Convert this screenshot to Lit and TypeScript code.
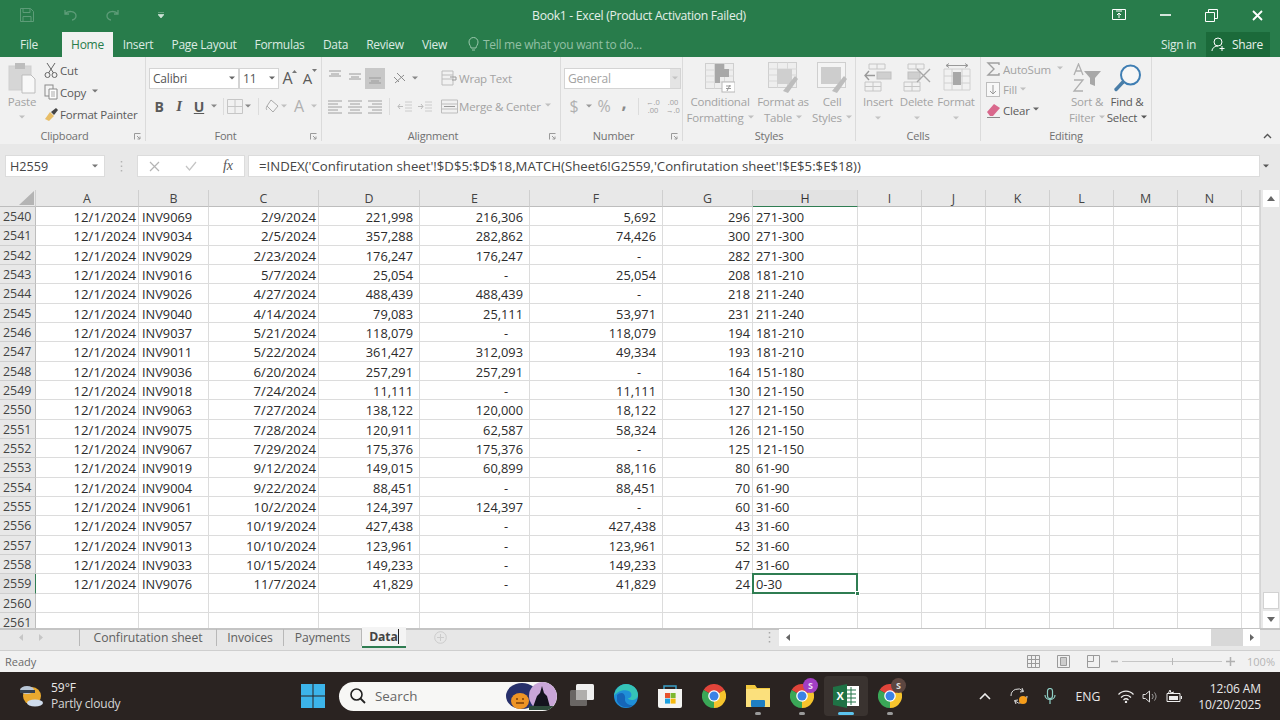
import { LitElement, html, css, svg } from 'lit';
import { customElement } from 'lit/decorators.js';

const rows = `2540 INV9069 2/9/2024 221,998 216,306 5,692 296 271-300
2541 INV9034 2/5/2024 357,288 282,862 74,426 300 271-300
2542 INV9029 2/23/2024 176,247 176,247 - 282 271-300
2543 INV9016 5/7/2024 25,054 - 25,054 208 181-210
2544 INV9026 4/27/2024 488,439 488,439 - 218 211-240
2545 INV9040 4/14/2024 79,083 25,111 53,971 231 211-240
2546 INV9037 5/21/2024 118,079 - 118,079 194 181-210
2547 INV9011 5/22/2024 361,427 312,093 49,334 193 181-210
2548 INV9036 6/20/2024 257,291 257,291 - 164 151-180
2549 INV9018 7/24/2024 11,111 - 11,111 130 121-150
2550 INV9063 7/27/2024 138,122 120,000 18,122 127 121-150
2551 INV9075 7/28/2024 120,911 62,587 58,324 126 121-150
2552 INV9067 7/29/2024 175,376 175,376 - 125 121-150
2553 INV9019 9/12/2024 149,015 60,899 88,116 80 61-90
2554 INV9004 9/22/2024 88,451 - 88,451 70 61-90
2555 INV9061 10/2/2024 124,397 124,397 - 60 31-60
2556 INV9057 10/19/2024 427,438 - 427,438 43 31-60
2557 INV9013 10/10/2024 123,961 - 123,961 52 31-60
2558 INV9033 10/15/2024 149,233 - 149,233 47 31-60
2559 INV9076 11/7/2024 41,829 - 41,829 24 0-30`
  .split('\n')
  .map((l) => l.split(' '));

const columns = 'A B C D E F G H I J K L M N'.split(' ');

const tabs = [
  ['File', 'w62', ''],
  ['Home', 'w51', 'active'],
  ['Insert', 'w48', ''],
  ['Page Layout', 'w84', ''],
  ['Formulas', 'w68', ''],
  ['Data', 'w44', ''],
  ['Review', 'w55', ''],
  ['View', 'w46', ''],
];

const icon = (w: number, h: number, body: unknown, cls = '') =>
  html`<svg class=${cls} width=${w} height=${h} viewBox="0 0 ${w} ${h}" fill="none">${body}</svg>`;

const lines = (xs: number[][], color = '#8c8c8c') =>
  xs.map(([x1, y, x2]) => svg`<path d="M${x1} ${y}H${x2}" stroke=${color} />`);

const chev = (color = '#9a9a9a') => icon(6, 4, svg`<path d="M0 .5h6L3 3.5z" fill=${color} />`);

const chrome = icon(
  24,
  24,
  svg`<path d="M12 12L1.6 6A12 12 0 0 1 22.4 6Z" fill="#e0443a" />
    <path d="M12 12L22.4 6A12 12 0 0 1 12 24Z" fill="#f6c42d" />
    <path d="M12 12L12 24A12 12 0 0 1 1.6 6Z" fill="#3aa757" />
    <circle cx="12" cy="12" r="5.8" fill="#fff" /><circle cx="12" cy="12" r="4.5" fill="#3b82e6" />`
);

const alignRow = (k: 'l' | 'c' | 'r') => {
  const a = [[1, 3, 15], [1, 6, 11], [1, 9, 15], [1, 12, 11], [1, 15, 15]];
  return icon(
    16,
    17,
    lines(a.map(([x, y, e], i) => (i % 2 === 0 || k === 'l' ? [x, y, e] : k === 'c' ? [3, y, 13] : [5, y, 15])), '#a0a0a0')
  );
};

@customElement('app-root')
export class AppRoot extends LitElement {
  static styles = css`
    :host {
      display: block;
      width: 1280px;
      height: 720px;
      overflow: hidden;
      font-family: 'Open Sans', 'Noto Sans', sans-serif;
      font-size: 11.5px;
      color: #5a5a5a;
      background: #f1f1f1;
    }
    svg {
      display: block;
      flex: none;
    }
    .titlebar {
      height: 30px;
      background: #287c4b;
      display: flex;
      align-items: center;
    }
    .qat {
      display: flex;
      align-items: center;
      padding-left: 20px;
      width: 320px;
      box-sizing: border-box;
      flex: none;
    }
    .qgap1 { width: 28px; flex: none; }
    .qgap2 { width: 29px; flex: none; }
    .qgap3 { width: 37px; flex: none; }
    .title {
      width: 638px;
      text-align: center;
      font-size: 12.2px;
      letter-spacing: -0.3px;
      color: #e4efe8;
    }
    .winbtns {
      display: flex;
      align-items: center;
      margin-left: auto;
    }
    .winbtn {
      width: 46px;
      display: flex;
      justify-content: center;
    }
    .tabbar {
      height: 27px;
      background: #287c4b;
      display: flex;
      align-items: flex-end;
      color: #dcebe2;
      font-size: 12px;
      letter-spacing: -0.28px;
    }
    .tab {
      height: 25px;
      display: flex;
      align-items: center;
      justify-content: center;
      flex: none;
    }
    .tab.active {
      background: #f1f1f1;
      color: #287c4b;
    }
    .w62 { width: 58px; margin-right: 4px; }
    .w51 { width: 51px; }
    .w48 { width: 50px; }
    .w84 { width: 82px; }
    .w68 { width: 69px; }
    .w44 { width: 43px; }
    .w55 { width: 56px; }
    .w46 { width: 43px; }
    .tell {
      display: flex;
      align-items: center;
      gap: 4px;
      height: 25px;
      margin-left: 12px;
      color: #93c0a5;
    }
    .signin {
      margin-left: auto;
      height: 25px;
      display: flex;
      align-items: center;
      padding-right: 10px;
    }
    .share {
      width: 64px;
      height: 25px;
      margin-right: 10px;
      display: flex;
      align-items: center;
      gap: 5px;
      padding-left: 5px;
      box-sizing: border-box;
      background: #1b6a3a;
      color: #e8f2ec;
    }
    .ribbon {
      height: 87px;
      display: flex;
      background: #f1f1f1;
      color: #a3a3a3;
      letter-spacing: -0.2px;
    }
    .group {
      flex: none;
      display: flex;
      flex-direction: column;
      box-sizing: border-box;
      border-right: 1px solid #dbdbdb;
      margin-bottom: 3px;
    }
    .body {
      height: 71px;
      display: flex;
      box-sizing: border-box;
    }
    .glabel {
      height: 13px;
      line-height: 16px;
      font-size: 11px;
      color: #707070;
      text-align: center;
      position: relative;
    }
    .glabel.wl { padding-right: 16px; }
    .launcher {
      position: absolute;
      right: 4px;
      top: 5px;
    }
    .g-clip { width: 146px; }
    .g-font { width: 176px; }
    .g-align { width: 239px; }
    .g-num { width: 122px; }
    .g-style { width: 173px; }
    .g-cells { width: 125px; }
    .g-edit { width: 171px; }
    .dark { color: #5a5a5a; }
    .pastecol {
      width: 44px;
      flex: none;
      display: flex;
      flex-direction: column;
      align-items: center;
      padding-top: 5px;
    }
    .big {
      flex: none;
      display: flex;
      flex-direction: column;
      align-items: center;
      padding-top: 4px;
      white-space: nowrap;
      line-height: 16px;
    }
    .st-a { width: 64px; margin-left: 5px; }
    .st-b { width: 62px; }
    .st-c { width: 36px; }
    .ce-a { width: 40px; margin-left: 2px; }
    .ce-b { width: 37px; }
    .ce-c { width: 42px; }
    .ed-a { width: 34px; }
    .ed-b { width: 44px; margin-left: 1px; }
    .bigicon {
      height: 33px;
      display: flex;
      align-items: center;
      justify-content: center;
    }
    .big span.chv {
      height: 16px;
      display: flex;
      align-items: center;
    }
    .chevline {
      height: 16px;
      display: flex;
      align-items: center;
    }
    .inl {
      display: inline-flex;
      vertical-align: middle;
      margin-left: 4px;
      padding-bottom: 2px;
    }
    .inl.tight { margin-left: 1px; }
    .smallcol {
      display: flex;
      flex-direction: column;
      padding-top: 2px;
      white-space: nowrap;
    }
    .edit-small {
      width: 84px;
      margin-left: 5px;
      flex: none;
    }
    .smallrow {
      height: 22px;
      display: flex;
      align-items: center;
      gap: 2px;
    }
    .sr20 { height: 20.5px; }
    .tworows {
      display: flex;
      flex-direction: column;
      gap: 6px;
      padding: 10px 0 0 3px;
    }
    .r {
      height: 22px;
      display: flex;
      align-items: center;
      white-space: nowrap;
    }
    .c {
      display: flex;
      align-items: center;
      justify-content: center;
      flex: none;
    }
    .c10 { width: 10px; }
    .c14 { width: 14px; }
    .c20 { width: 20px; }
    .c116 { width: 116px; flex: none; }
    .ml1 { margin-left: 1px; }
    .ml5 { margin-left: 5px; }
    .ml6 { margin-left: 6px; }
    .combo {
      height: 21px;
      box-sizing: border-box;
      background: #fff;
      border: 1px solid #d4d4d4;
      display: flex;
      align-items: center;
      justify-content: space-between;
      padding: 0 3px;
      color: #555;
      flex: none;
      font-size: 12px;
    }
    .cb-font { width: 90px; }
    .cb-size { width: 40px; margin-right: 4px; }
    .cb-num {
      width: 117px;
      color: #a3a3a3;
      padding-right: 0;
    }
    .cb-num i {
      width: 10px;
      height: 19px;
      background: #e4e4e4;
      display: flex;
      align-items: center;
      justify-content: center;
    }
    .sep {
      width: 1px;
      height: 17px;
      background: #dcdcdc;
      margin: 0 4px;
      flex: none;
    }
    .sep.s1 { margin: 0 3px 0 4px; }
    .sep.s2 { margin: 0 6px 0 5px; }
    .active-box {
      height: 21px;
      background: #c8c8c8;
    }
    .b { font-weight: 700; font-size: 14px; color: #5a5a5a; }
    .it { font-style: italic; font-family: 'Liberation Serif', serif; font-weight: 700; font-size: 15px; color: #5a5a5a; }
    .u { text-decoration: underline; font-weight: 700; font-size: 14px; color: #5a5a5a; }
    .grow { font-size: 16px; color: #5a5a5a; align-items: flex-start; line-height: 21px; }
    .shrink { font-size: 15px; color: #5a5a5a; align-items: flex-start; line-height: 22px; }
    .sup { margin-top: 2px; }
    .glyphB { font-size: 16px; color: #b0b0b0; }
    .comma { font-size: 18px; font-weight: 700; color: #8a8a8a; line-height: 14px; padding-bottom: 8px; }
    .stack {
      flex-direction: column;
      font-size: 7.5px;
      line-height: 8.5px;
      color: #a0a0a0;
      letter-spacing: 0;
    }
    .collapse {
      margin: 76px 0 0 auto;
      padding-right: 8px;
    }
    .fbarwrap {
      height: 46px;
      background: #e8e8e8;
      box-sizing: border-box;
      padding: 11px 0 0 5px;
      display: flex;
    }
    .fbox {
      height: 22px;
      background: #fff;
      border: 1px solid #dcdcdc;
      box-sizing: border-box;
      display: flex;
      align-items: center;
      flex: none;
      font-size: 12.6px;
      color: #444;
    }
    .namebox {
      width: 100px;
      justify-content: space-between;
      padding: 0 6px 0 4px;
    }
    .dots {
      width: 32px;
      height: 22px;
      display: flex;
      justify-content: center;
      align-items: center;
    }
    .fxbox {
      width: 108px;
      justify-content: space-between;
      padding: 0 11px;
    }
    .fx {
      font-family: 'Liberation Serif', serif;
      font-style: italic;
      font-size: 14px;
      color: #555;
    }
    .ftext {
      width: 1012px;
      margin-left: 3px;
      padding-left: 10px;
      white-space: nowrap;
      font-size: 13.2px;
    }
    .fdrop {
      width: 12px;
      display: flex;
      justify-content: center;
      align-items: center;
      height: 22px;
    }
    .sheetarea {
      display: flex;
      height: 438px;
      background: #fff;
    }
    .grid {
      width: 1260px;
      flex: none;
      display: grid;
      grid-template-columns: 36px 103px 70px 110px 101px 110px 133px 90px 105px 64px 64px 64px 64px 64px 64px 18px;
      grid-template-rows: 17px;
      grid-auto-rows: 19.34px;
      overflow: hidden;
      font-size: 12.8px;
      color: #2b2b2b;
    }
    .hd {
      background: #e8e8e8;
      border-right: 1px solid #cfcfcf;
      border-bottom: 1px solid #bdbdbd;
      box-sizing: border-box;
      text-align: center;
      line-height: 17px;
      color: #444;
      font-size: 12.4px;
    }
    .hd.sel {
      background: #e2e2e2;
      border-bottom: 1px solid #2f7d52;
      color: #333;
    }
    .corner {
      position: relative;
    }
    .corner svg {
      position: absolute;
      right: 1px;
      bottom: 1px;
    }
    .rh {
      background: #e8e8e8;
      border-right: 1px solid #bdbdbd;
      border-bottom: 1px solid #cfcfcf;
      box-sizing: border-box;
      padding-left: 3px;
      line-height: 20px;
      color: #444;
      font-size: 12.4px;
    }
    .rh.sel {
      border-right: 1px solid #2f7d52;
      background: #e2e2e2;
    }
    .cell {
      border-right: 1px solid #dcdcdc;
      border-bottom: 1px solid #dcdcdc;
      box-sizing: border-box;
      line-height: 20px;
      white-space: nowrap;
      overflow: hidden;
      padding: 0 2px;
    }
    .cell.left { padding-left: 3px; }
    .ra { text-align: right; }
    .date { font-size: 13.2px; }
    .money { text-align: right; padding-right: 6px; }
    .dash { text-align: right; padding-right: 21px; }
    .selected {
      position: relative;
      overflow: visible;
    }
    .selected::after {
      content: '';
      position: absolute;
      inset: -1px;
      border: 2px solid #2f7d52;
      box-sizing: border-box;
    }
    .selected::before {
      content: '';
      position: absolute;
      right: -3px;
      bottom: -3px;
      width: 5px;
      height: 5px;
      background: #2f7d52;
      border: 1px solid #fff;
      box-sizing: border-box;
      z-index: 1;
    }
    .vscroll {
      width: 20px;
      background: #e8e8e8;
      display: flex;
      flex-direction: column;
      align-items: center;
      flex: none;
      border-left: 1px solid #d4d4d4;
      box-sizing: border-box;
    }
    .sbtn {
      width: 16px;
      height: 17px;
      background: #fff;
      display: flex;
      align-items: center;
      justify-content: center;
    }
    .vthumb {
      width: 16px;
      height: 17px;
      background: #fff;
      margin: auto 0 2px;
      border: 1px solid #d2d2d2;
      box-sizing: border-box;
    }
    .tabstrip {
      height: 23px;
      background: #e7e7e7;
      border-top: 2px solid #c4c4c4;
      border-bottom: 1px solid #cfcfcf;
      padding-bottom: 5px;
      box-sizing: border-box;
      display: flex;
      align-items: center;
      color: #606060;
      font-size: 12.2px;
    }
    .navs {
      width: 80px;
      display: flex;
      gap: 16px;
      padding-left: 19px;
      box-sizing: border-box;
      flex: none;
      height: 17px;
      align-items: center;
      border-right: 1px solid #b8b8b8;
    }
    .stab {
      height: 17px;
      display: flex;
      align-items: center;
      justify-content: center;
      border-right: 1px solid #b8b8b8;
      box-sizing: border-box;
      flex: none;
      letter-spacing: -0.05px;
    }
    .st1 { width: 137px; }
    .st2 { width: 67px; }
    .st3 { width: 78px; }
    .sactive {
      width: 44px;
      height: 21px;
      flex: none;
      background: #f4f4f4;
      border-bottom: 2px solid #2f7d52;
      box-sizing: border-box;
      display: flex;
      align-items: center;
      justify-content: center;
      font-weight: 700;
      letter-spacing: -0.1px;
      color: #444;
    }
    .caret {
      width: 1px;
      height: 15px;
      background: #222;
    }
    .add {
      margin-left: 28px;
      width: 325px;
      flex: none;
    }
    .hsgrip {
      width: 20px;
      flex: none;
      display: flex;
      justify-content: center;
    }
    .hs {
      width: 481px;
      height: 17px;
      display: flex;
      flex: none;
      background: #d8d8d8;
    }
    .hsbtn {
      width: 17px;
      background: #fff;
      display: flex;
      align-items: center;
      justify-content: center;
      flex: none;
    }
    .hsthumb {
      width: 415px;
      background: #fff;
      flex: none;
    }
    .hsgap { flex: 1; }
    .status {
      height: 21px;
      display: flex;
      align-items: center;
      padding-left: 5px;
      color: #6a6a6a;
      font-size: 11px;
      background: #f1f1f1;
    }
    .views {
      margin-left: auto;
      display: flex;
      align-items: center;
    }
    .viewbtn {
      width: 30px;
      display: flex;
      justify-content: center;
    }
    .zoom {
      display: flex;
      align-items: center;
      margin: 0 5px 0 3px;
      color: #b5b5b5;
      gap: 4px;
    }
    .zoom span { margin-left: 8px; }
    .slider {
      width: 100px;
      height: 9px;
      position: relative;
    }
    .slider::before {
      content: '';
      position: absolute;
      left: 0;
      right: 0;
      top: 4px;
      height: 1px;
      background: #c6c6c6;
    }
    .slider::after {
      content: '';
      position: absolute;
      left: 50px;
      top: 1px;
      width: 1px;
      height: 7px;
      background: #b8b8b8;
    }
    .taskbar {
      height: 48px;
      background: #2a2321;
      display: flex;
      align-items: center;
      color: #e9e9e9;
    }
    .weather {
      width: 291px;
      flex: none;
      display: flex;
      align-items: center;
      gap: 8px;
      padding-left: 19px;
      box-sizing: border-box;
      font-size: 12px;
      line-height: 16px;
    }
    .weather small {
      display: block;
      font-size: 12px;
      letter-spacing: -0.2px;
      color: #d6d6d6;
    }
    .tb {
      width: 44px;
      height: 40px;
      flex: none;
      display: flex;
      align-items: center;
      justify-content: center;
      position: relative;
      box-sizing: border-box;
    }
    .tb.open::after {
      content: '';
      position: absolute;
      bottom: 1px;
      left: 19px;
      width: 6px;
      height: 3px;
      border-radius: 2px;
      background: #9a9a9a;
    }
    .tb.current {
      background: #3a3330;
      border-radius: 4px;
    }
    .tb.current::after {
      left: 14px;
      width: 16px;
      background: #5cc4ee;
    }
    .badge {
      position: absolute;
      top: 2px;
      right: 6px;
      width: 15px;
      height: 15px;
      border-radius: 50%;
      background: #a23ec4;
      color: #eedcf4;
      font-size: 9px;
      font-weight: 700;
      display: flex;
      align-items: center;
      justify-content: center;
    }
    .badge.brown {
      background: #5d4640;
      color: #ddd;
    }
    .search {
      width: 218px;
      height: 29px;
      margin: 0 3px 0 4px;
      flex: none;
      border-radius: 15px;
      background: #f7f7f5;
      display: flex;
      align-items: center;
      padding-left: 11px;
      box-sizing: border-box;
      color: #666;
      font-size: 13.4px;
      gap: 9px;
      overflow: hidden;
    }
    .doodle {
      margin-left: auto;
    }
    .tray {
      margin-left: 64px;
      display: flex;
      align-items: center;
      flex: none;
    }
    .t {
      display: flex;
      justify-content: center;
      align-items: center;
      flex: none;
    }
    .t-chev { width: 18px; margin-right: 15px; }
    .t-sync { width: 20px; margin-right: 13px; }
    .t-mic { width: 16px; margin-right: 16px; }
    .t-eng { width: 28px; font-size: 12.2px; margin-right: 15px; }
    .t-wifi { width: 18px; margin-right: 5px; }
    .t-vol { width: 18px; margin-right: 7px; }
    .t-bat { width: 18px; }
    .clock {
      margin-left: 8px;
      width: 70px;
      padding-top: 1px;
      text-align: right;
      font-size: 12px;
      letter-spacing: -0.1px;
      line-height: 16px;
    }
  `;

  private paste() {
    return icon(
      28,
      32,
      svg`<rect x="1" y="4" width="22" height="24" fill="#d6d6d6" stroke="#cfcfcf" />
        <rect x="7" y="1" width="10" height="6" fill="#bdbdbd" />
        <path d="M14 13h9l4 4v14H14z" fill="#f8f8f8" stroke="#bdbdbd" />`
    );
  }

  private clipboard() {
    return html`<div class="group g-clip">
      <div class="body">
        <div class="pastecol">
          ${this.paste()}
          <span>Paste</span>
          <div class="chevline">${chev('#c0c0c0')}</div>
        </div>
        <div class="smallcol dark">
          <div class="smallrow">
            ${icon(14, 16, svg`<circle cx="3.5" cy="13" r="2.5" stroke="#666" /><circle cx="10.5" cy="13" r="2.5" stroke="#666" />
              <path d="M4.5 11L11 1M9.5 11L3 1" stroke="#666" />`)}
            Cut
          </div>
          <div class="smallrow">
            ${icon(14, 16, svg`<rect x="1" y="1" width="8" height="11" fill="#f4f4f4" stroke="#8a8a8a" />
              <path d="M5 5h8v10H5z" fill="#fff" stroke="#8a8a8a" /><path d="M7 8h4M7 10h4M7 12h4" stroke="#aaa" />`)}
            Copy <span class="inl">${chev('#777')}</span>
          </div>
          <div class="smallrow">
            ${icon(14, 14, svg`<path d="M1 12l5-7 4 4-5 5z" fill="#e8bd66" /><path d="M7 5l5-4 2 2-4 5z" fill="#444" />`)}
            Format Painter
          </div>
        </div>
      </div>
      <div class="glabel wl">Clipboard${this.launcher()}</div>
    </div>`;
  }

  private launcher() {
    return html`<span class="launcher">${icon(7, 7, svg`<path d="M.5 6.5v-6h6M3 3l3 3M6 3.5V6H3.5" stroke="#9a9a9a" />`)}</span>`;
  }

  private font() {
    return html`<div class="group g-font">
      <div class="body">
        <div class="tworows">
          <div class="r">
            <div class="combo cb-font">Calibri ${chev('#666')}</div>
            <div class="combo cb-size">11 ${chev('#666')}</div>
            <span class="c c14 grow">A${icon(5, 3, svg`<path d="M0 3l2.500-3L5 3z" fill="#777" />`, 'sup')}</span>
            <span class="c c14 shrink ml6">A${icon(5, 3, svg`<path d="M0 0l2.500 3L5 0z" fill="#777" />`, 'sup')}</span>
          </div>
          <div class="r">
            <span class="c c20 b">B</span>
            <span class="c c20 it">I</span>
            <span class="c c20 u">U</span>
            <span class="c c10">${chev('#888')}</span>
            <span class="sep s1"></span>
            ${icon(16, 15, svg`<path d="M.5.5h15v14H.5zM8 .5v14M.5 7.5h15" stroke="#c6c6c6" />`)}
            <span class="c c10">${chev('#888')}</span>
            <span class="sep s2"></span>
            ${icon(14, 15, svg`<path d="M6 1l7 6-5 6-6-6z" fill="#f4f4f4" stroke="#aaa" /><path d="M2 7c-1 2-1 3 0 4" stroke="#aaa" />`)}
            <span class="c c10">${chev('#c0c0c0')}</span>
            <span class="c c20 glyphB">A</span>
            <span class="c c10">${chev('#c0c0c0')}</span>
          </div>
        </div>
      </div>
      <div class="glabel wl">Font${this.launcher()}</div>
    </div>`;
  }

  private alignment() {
    const top = (y: number) =>
      icon(16, 17, lines([[2, y, 14], [4, y + 3, 12], [2, y + 5, 14]], '#9a9a9a'));
    return html`<div class="group g-align">
      <div class="body">
        <div class="tworows">
          <div class="r">
            <div class="r c116">
              <span class="c c20">${top(1)}</span>
              <span class="c c20">${top(4)}</span>
              <span class="c c20 active-box">${top(8)}</span>
              <span class="c c20 ml5">
                ${icon(16, 14, svg`<path d="M3 12l9-8M5 2l8 8M2 6l5 5" stroke="#8c8c8c" />`)}
              </span>
              <span class="c c10">${chev('#888')}</span>
            </div>
            ${icon(17, 16, svg`<path d="M1 1h11v14H1zM1 5h11M1 9h11" stroke="#bdbdbd" /><path d="M9 7h6v3h-4" stroke="#999" />`)}
            <span class="ml1">Wrap Text</span>
          </div>
          <div class="r">
            <div class="r c116">
              <span class="c c20">${alignRow('l')}</span>
              <span class="c c20">${alignRow('c')}</span>
              <span class="c c20">${alignRow('r')}</span>
              <span class="sep"></span>
              <span class="c c20">${icon(15, 13, svg`<path d="M1 6.5h5M3 4L1 6.5 3 9" stroke="#bbb" />${lines([[8, 2, 15], [8, 5, 15], [8, 8, 15], [8, 11, 15]], '#ccc')}`)}</span>
              <span class="c c20">${icon(15, 13, svg`<path d="M1 6.5h5M4 4l2 2.5L4 9" stroke="#bbb" />${lines([[8, 2, 15], [8, 5, 15], [8, 8, 15], [8, 11, 15]], '#ccc')}`)}</span>
            </div>
            ${icon(17, 15, svg`<path d="M.5 1h16v13H.5zM.5 5h16M.5 10h16" stroke="#bdbdbd" /><path d="M3 7.5h11" stroke="#999" />`)}
            <span class="ml1">Merge &amp; Center</span>
            <span class="inl">${chev('#c0c0c0')}</span>
          </div>
        </div>
      </div>
      <div class="glabel wl">Alignment${this.launcher()}</div>
    </div>`;
  }

  private number() {
    return html`<div class="group g-num">
      <div class="body">
        <div class="tworows">
          <div class="r">
            <div class="combo cb-num">General <i>${chev('#c4c4c4')}</i></div>
          </div>
          <div class="r">
            <span class="c c20 glyphB">$</span>
            <span class="c c10">${chev('#999')}</span>
            <span class="c c20 glyphB">%</span>
            <span class="c c20 comma">,</span>
            <span class="sep"></span>
            <span class="c c20 stack"><span>←.0</span><span>.00</span></span>
            <span class="c c20 stack"><span>.00</span><span>→.0</span></span>
          </div>
        </div>
      </div>
      <div class="glabel wl">Number${this.launcher()}</div>
    </div>`;
  }

  private big(label: string, second: unknown, art: unknown, cls: string, dark = false) {
    return html`<div class="big ${cls} ${dark ? 'dark' : ''}">
      <div class="bigicon">${art}</div>
      <span>${label}</span>
      <span class="chv">${second}</span>
    </div>`;
  }

  private styles_() {
    const table = svg`<rect x=".5" y=".5" width="28" height="25" fill="#eee" stroke="#cfcfcf" />
      <path d="M.5 7h28M.5 13h28M.5 19h28M9.5.5v25M19.5.5v25" stroke="#d8d8d8" />`;
    const brush = svg`<path d="M15 29l12-15 3 3-10 14z" fill="#bdbdbd" />`;
    return html`<div class="group g-style">
      <div class="body">
        ${this.big(
          'Conditional',
          html`Formatting <span class="inl">${chev('#c0c0c0')}</span>`,
          icon(30, 30, svg`${table}<path d="M10 1h9v5h5v8h-9v6h-5z" fill="#a8a8a8" />
            <rect x="17" y="19" width="13" height="10" fill="#fff" stroke="#b8b8b8" />
            <path d="M21 23h5M21 25.5h5M22 28l3-6" stroke="#999" />`),
          'st-a'
        )}
        ${this.big(
          'Format as',
          html`Table <span class="inl">${chev('#c0c0c0')}</span>`,
          icon(30, 31, svg`${table}<rect x="9" y="7" width="15" height="15" fill="#cfcfcf" />${brush}`),
          'st-b'
        )}
        ${this.big(
          'Cell',
          html`Styles <span class="inl">${chev('#c0c0c0')}</span>`,
          icon(30, 31, svg`<rect x=".5" y=".5" width="28" height="25" fill="#f4f4f4" stroke="#cfcfcf" />
            <rect x="4" y="5" width="20" height="17" fill="#cdcdcd" />${brush}`),
          'st-c'
        )}
      </div>
      <div class="glabel">Styles</div>
    </div>`;
  }

  private cells() {
    const small = svg`<path d="M6 1h16v5H6zM14 1v5M2 19h16v9H2zM10 19v9M2 23.5h16" stroke="#c6c6c6" />`;
    return html`<div class="group g-cells">
      <div class="body">
        ${this.big(
          'Insert',
          chev('#c4c4c4'),
          icon(30, 30, svg`${small}<rect x="14" y="9" width="14" height="7" fill="#cfcfcf" stroke="#c0c0c0" /><path d="M12 12.5H2M6 8l-4 4.5L6 17" stroke="#9a9a9a" stroke-width="1.4" />`),
          'ce-a'
        )}
        ${this.big(
          'Delete',
          chev('#c4c4c4'),
          icon(30, 30, svg`${small}<rect x="6" y="9" width="12" height="7" fill="#cfcfcf" stroke="#c0c0c0" /><path d="M15 6l13 13M28 6L15 19" stroke="#a8a8a8" stroke-width="1.4" />`),
          'ce-b'
        )}
        ${this.big(
          'Format',
          chev('#c4c4c4'),
          icon(30, 30, svg`<path d="M3 6h26v21H3zM11 6v21M21 6v21M3 13h26M3 20h26" stroke="#d0d0d0" /><path d="M5 2.5h22M5 2.5L8 .5M5 2.5l3 2M27 2.5l-3-2M27 2.5l-3 2" stroke="#999" /><rect x="12" y="9" width="8" height="13" fill="#a8a8a8" />`),
          'ce-c'
        )}
      </div>
      <div class="glabel">Cells</div>
    </div>`;
  }

  private editing() {
    return html`<div class="group g-edit">
      <div class="body">
        <div class="smallcol edit-small">
          <div class="smallrow sr20">
            ${icon(15, 14, svg`<path d="M13 3V1H2l6 6-6 6h11v-2" stroke="#a0a0a0" stroke-width="1.4" />`)}
            AutoSum <span class="inl">${chev('#c0c0c0')}</span>
          </div>
          <div class="smallrow sr20">
            ${icon(15, 15, svg`<rect x=".5" y=".5" width="13" height="14" fill="#f8f8f8" stroke="#bdbdbd" /><path d="M7 3v9M4 9l3 3 3-3" stroke="#999" />`)}
            Fill <span class="inl tight">${chev('#c0c0c0')}</span>
          </div>
          <div class="smallrow sr20 dark">
            ${icon(15, 15, svg`<path d="M1 9l7-8 6 4-7 8H4z" fill="#d9688c" /><path d="M1 14.5h13" stroke="#888" />`)}
            Clear <span class="inl tight">${chev('#666')}</span>
          </div>
        </div>
        ${this.big(
          'Sort &',
          html`Filter <span class="inl">${chev('#c0c0c0')}</span>`,
          icon(30, 30, svg`<path d="M2 12L6.500 1 11 12M3.500 8h6M2 17h9L2 28h9" stroke="#b0b0b0" stroke-width="1.300" />
            <path d="M12 8h17l-6 7v8l-5-2v-6z" fill="#a8a8a8" />`),
          'ed-a'
        )}
        ${this.big(
          'Find &',
          html`Select <span class="inl">${chev('#555')}</span>`,
          icon(28, 28, svg`<circle cx="17.500" cy="11" r="9.500" stroke="#3f7eb3" stroke-width="2" fill="#f6f6f6" />
            <path d="M10 18L3 25.500" stroke="#4a7ea8" stroke-width="3.400" stroke-linecap="round" />`),
          'ed-b',
          true
        )}
      </div>
      <div class="glabel">Editing</div>
    </div>`;
  }

  private sheet() {
    return html`<div class="sheetarea">
      <div class="grid">
        <div class="hd corner">${icon(15, 14, svg`<path d="M15 0v14H0z" fill="#b4b4b4" />`)}</div>
        ${columns.map((c) => html`<div class="hd ${c === 'H' ? 'sel' : ''}">${c}</div>`)}
        <div class="hd"></div>
        ${rows.map((r, i) => {
          const last = i === rows.length - 1;
          const [n, inv, date, d, e, f, g, h] = r;
          return html`
            <div class="rh ${last ? 'sel' : ''}">${n}</div>
            <div class="cell ra date">12/1/2024</div>
            <div class="cell left">${inv}</div>
            <div class="cell ra date">${date}</div>
            <div class="cell money">${d}</div>
            <div class="cell ${e === '-' ? 'dash' : 'money'}">${e}</div>
            <div class="cell ${f === '-' ? 'dash' : 'money'}">${f}</div>
            <div class="cell ra">${g}</div>
            <div class="cell left ${last ? 'selected' : ''}">${h}</div>
            ${columns.slice(8).map(() => html`<div class="cell"></div>`)}
            <div class="cell"></div>
          `;
        })}
        ${['2560', '2561'].map(
          (n) => html`<div class="rh">${n}</div>
            ${columns.map(() => html`<div class="cell"></div>`)}
            <div class="cell"></div>`
        )}
      </div>
      <div class="vscroll">
        <div class="sbtn">${icon(8, 5, svg`<path d="M0 5h8L4 0z" fill="#666" />`)}</div>
        <div class="vthumb"></div>
        <div class="sbtn">${icon(8, 5, svg`<path d="M0 0h8L4 5z" fill="#666" />`)}</div>
      </div>
    </div>`;
  }

  private strip() {
    return html`<div class="tabstrip">
      <div class="navs">
        ${icon(4, 7, svg`<path d="M4 0v7L0 3.5z" fill="#c6c6c6" />`)}
        ${icon(4, 7, svg`<path d="M0 0v7l4-3.5z" fill="#c6c6c6" />`)}
      </div>
      <div class="stab st1">Confirutation sheet</div>
      <div class="stab st2">Invoices</div>
      <div class="stab st3">Payments</div>
      <div class="sactive">Data<span class="caret"></span></div>
      <div class="add">${icon(13, 13, svg`<circle cx="6.5" cy="6.5" r="5.8" stroke="#ccc" /><path d="M6.5 3v7M3 6.5h7" stroke="#ccc" />`)}</div>
      <div class="hsgrip">${icon(3, 11, svg`<path d="M1.500 0v1.500M1.500 4.500V6M1.500 9v1.500" stroke="#a8a8a8" stroke-width="1.500" />`)}</div>
      <div class="hs">
        <div class="hsbtn">${icon(4, 7, svg`<path d="M4 0v7L0 3.5z" fill="#666" />`)}</div>
        <div class="hsthumb"></div>
        <div class="hsgap"></div>
        <div class="hsbtn">${icon(4, 7, svg`<path d="M0 0v7l4-3.5z" fill="#666" />`)}</div>
      </div>
    </div>`;
  }

  private taskbar() {
    return html`<div class="taskbar">
      <div class="weather">
        ${icon(24, 24, svg`<circle cx="13" cy="12" r="9" fill="#e8a92f" /><ellipse cx="8" cy="6" rx="7" ry="4" fill="#b9c6d6" />
          <rect x="1" y="6" width="15" height="3" fill="#34404e" /><ellipse cx="16" cy="19" rx="8" ry="3.4" fill="#cfdcec" />`)}
        <div>59°F<small>Partly cloudy</small></div>
      </div>
      <div class="tb">
        ${icon(24, 24, svg`<path d="M0 0h11.5v11.5H0zM12.5 0H24v11.5H12.5zM0 12.5h11.5V24H0zM12.5 12.5H24V24H12.5z" fill="#3cb4ea" />`)}
      </div>
      <div class="search">
        ${icon(16, 16, svg`<circle cx="6.5" cy="6.5" r="5.5" stroke="#222" stroke-width="1.6" /><path d="M10.5 10.5L15 15" stroke="#222" stroke-width="1.8" />`)}
        Search
        <div class="doodle">
          ${icon(52, 29, svg`<ellipse cx="17" cy="14" rx="16" ry="13" fill="#27306b" />
            <ellipse cx="38" cy="14" rx="14" ry="14" fill="#c9a6d8" />
            <path d="M28 25l4-11 3-3 2-7 2 7 3 3 3 11z" fill="#14141e" />
            <rect x="24" y="24" width="24" height="4" fill="#2d4a3a" />
            <ellipse cx="15" cy="19" rx="9" ry="8" fill="#ee9425" />
            <path d="M11 17h2M17 17h2M11 21h8" stroke="#7a3c08" stroke-width="1.4" />`)}
        </div>
      </div>
      <div class="tb">
        ${icon(24, 24, svg`<rect x="0" y="6" width="17" height="16" rx="1.5" fill="#6a6664" /><rect x="6" y="0" width="18" height="16" rx="1.5" fill="#efefef" />
          <rect x="6" y="6" width="11" height="10" fill="#b0aeac" />`)}
      </div>
      <div class="tb">
        ${icon(24, 24, svg`<circle cx="12" cy="12" r="12" fill="#1f8fd8" /><path d="M0 12C1 4 7 0 12 0c7 0 12 5 12 11 0 3-3 5-6 5-2 0-4-1-4-2 3 0 4-2 3-5-2-4-12-4-17 3z" fill="#35c3b6" />
          <path d="M3 11c4-4 9-2 8 4-.5 3 3 7 8 6-4 4-13 3-16-4z" fill="#1565b8" />`)}
      </div>
      <div class="tb">
        ${icon(24, 24, svg`<path d="M6 6V2h12v4" stroke="#3aa0c8" stroke-width="1.5" /><path d="M0 5h24v17a2 2 0 0 1-2 2H2a2 2 0 0 1-2-2z" fill="#f4f4f2" />
          <rect x="7" y="9" width="5" height="5" fill="#e6522c" /><rect x="12.6" y="9" width="5" height="5" fill="#7cb82f" />
          <rect x="7" y="14.6" width="5" height="5" fill="#1da1e0" /><rect x="12.6" y="14.6" width="5" height="5" fill="#f6b90f" />`)}
      </div>
      <div class="tb">${chrome}</div>
      <div class="tb open">
        ${icon(24, 22, svg`<path d="M0 0h9l2 3h13v19H0z" fill="#f2c93e" /><rect x="0" y="4" width="24" height="18" fill="#fbe07c" /><rect x="5" y="15" width="14" height="7" rx="1" fill="#1f7fc2" />`)}
      </div>
      <div class="tb open">${chrome}<span class="badge">S</span></div>
      <div class="tb open current">
        ${icon(26, 24, svg`<rect x="11" y="2" width="15" height="20" fill="#fff" /><path d="M14 6h9M14 10h9M14 14h9M14 18h9M18 3v18" stroke="#217346" />
          <path d="M0 3l14-3v24L0 21z" fill="#1f7245" /><text x="3.5" y="16" font-size="11" font-weight="700" fill="#fff" font-family="Open Sans">X</text>`)}
      </div>
      <div class="tb open">${chrome}<span class="badge brown">S</span></div>
      <div class="tray">
        <div class="t t-chev">${icon(12, 7, svg`<path d="M1 6l5-5 5 5" stroke="#eee" stroke-width="1.6" />`)}</div>
        <div class="t t-sync">
          ${icon(18, 18, svg`<path d="M1 9a7 7 0 0 1 12-5M12 1l1.500 3.500L10 5M17 9a7 7 0 0 1-12 5M6 17l-1.500-3.500L8 13" stroke="#ddd" />
            <circle cx="13" cy="13" r="4" fill="#f59c1a" />`)}
        </div>
        <div class="t t-mic">
          ${icon(12, 16, svg`<rect x="3.500" y=".5" width="5" height="10" rx="2.500" stroke="#8fd0c6" stroke-width="1.2" /><path d="M1 7c0 6 10 6 10 0M6 12v4" stroke="#8fd0c6" stroke-width="1.2" />`)}
        </div>
        <div class="t t-eng">ENG</div>
        <div class="t t-wifi">
          ${icon(16, 13, svg`<path d="M.5 4.500c4-4.500 11-4.500 15 0M3 7.500c3-3 7-3 10 0M5.500 10c1.500-1.500 3.500-1.500 5 0" stroke="#eee" stroke-width="1.200" /><circle cx="8" cy="12" r="1.200" fill="#eee" />`)}
        </div>
        <div class="t t-vol">
          ${icon(15, 13, svg`<path d="M1 4.500h2.500L7.500 1v11L3.500 8.500H1z" stroke="#ddd" /><path d="M10 4c1.500 2 1.500 3 0 5M12.500 2.500c2 3 2 5 0 8" stroke="#aaa" />`)}
        </div>
        <div class="t t-bat">
          ${icon(16, 12, svg`<path d="M1 3.500h13v8H1z" fill="none" stroke="#eee" /><path d="M3 6h9v4H3z" fill="#eee" /><path d="M15.500 6v3" stroke="#eee" stroke-width="1.400" /><path d="M2 4l2-4 1 3 3-1" stroke="#eee" />`)}
        </div>
        <div class="clock">12:06 AM<br />10/20/2025</div>
      </div>
    </div>`;
  }

  render() {
    return html`
      <div class="titlebar">
        <div class="qat">
          ${icon(14, 14, svg`<path d="M.5.5h10l3 3v10H.5zM3 .5v4h7v-4M3 13.500v-5h8v5" stroke="#5d9c78" />`)}
          <span class="qgap1"></span>
          ${icon(15, 12, svg`<path d="M3 1v4h4M3 5c3-4 11-3 11 2 0 2-2 4-4 4" stroke="#5d9c78" stroke-width="1.300" />`)}
          <span class="qgap2"></span>
          ${icon(15, 12, svg`<path d="M12 1v4H8M12 5C9 1 1 2 1 7c0 2 2 4 4 4" stroke="#5d9c78" stroke-width="1.300" />`)}
          <span class="qgap3"></span>
          ${icon(6, 7, svg`<path d="M0 0h6M0 2.500h6l-3 3.500z" stroke="#cfe3d7" fill="#cfe3d7" stroke-width=".7" />`)}
        </div>
        <div class="title">Book1 - Excel (Product Activation Failed)</div>
        <div class="winbtns">
          <div class="winbtn">${icon(14, 12, svg`<path d="M.5.5h13v10H.5zM4 2h6M7 9V4M5 6l2-2 2 2" stroke="#fff" />`)}</div>
          <div class="winbtn">${icon(11, 2, svg`<path d="M0 1h11" stroke="#fff" stroke-width="1.600" />`)}</div>
          <div class="winbtn">${icon(13, 13, svg`<path d="M.5 3.500h9v9h-9zM3.500 3.500v-3h9v9h-3" stroke="#fff" />`)}</div>
          <div class="winbtn">${icon(11, 11, svg`<path d="M1 1l9 9M10 1l-9 9" stroke="#fff" stroke-width="1.800" />`)}</div>
        </div>
      </div>
      <div class="tabbar">
        ${tabs.map(([t, w, a]) => html`<div class="tab ${w} ${a}">${t}</div>`)}
        <div class="tell">
          ${icon(11, 15, svg`<path d="M3 11c0-2-2-3-2-6a4.500 4.500 0 0 1 9 0c0 3-2 4-2 6zM4 13h3" stroke="#9cc9ae" />`)}
          Tell me what you want to do...
        </div>
        <div class="signin">Sign in</div>
        <div class="share">
          ${icon(16, 15, svg`<circle cx="7" cy="5" r="4" stroke="#fff" /><path d="M1 14c0-3 3-5 6-5M11 9v5M8.500 11.500h5" stroke="#fff" />`)}
          Share
        </div>
      </div>
      <div class="ribbon">
        ${this.clipboard()} ${this.font()} ${this.alignment()} ${this.number()} ${this.styles_()} ${this.cells()} ${this.editing()}
        <div class="collapse">${icon(9, 6, svg`<path d="M1 5l3.500-3.500L8 5" stroke="#555" stroke-width="1.400" />`)}</div>
      </div>
      <div class="fbarwrap">
        <div class="fbox namebox">H2559 ${chev('#777')}</div>
        <div class="dots">${icon(3, 13, svg`<path d="M1.500 1v1.500M1.500 5.500V7M1.500 10v1.500" stroke="#b4b4b4" stroke-width="1.500" />`)}</div>
        <div class="fbox fxbox">
          ${icon(11, 11, svg`<path d="M1 1l9 9M10 1l-9 9" stroke="#b4b4b4" stroke-width="1.200" />`)}
          ${icon(12, 10, svg`<path d="M1 5l3.500 4L11 1" stroke="#c4c4c4" stroke-width="1.200" />`)}
          <span class="fx">fx</span>
        </div>
        <div class="fbox ftext">=INDEX('Confirutation sheet'!$D$5:$D$18,MATCH(Sheet6!G2559,'Confirutation sheet'!$E$5:$E$18))</div>
        <div class="fdrop">${chev('#555')}</div>
      </div>
      ${this.sheet()} ${this.strip()}
      <div class="status">
        Ready
        <div class="views">
          <div class="viewbtn">${icon(13, 13, svg`<path d="M.5.5h12v12H.5zM4.500.5v12M8.500.5v12M.5 4.500h12M.5 8.500h12" stroke="#9a9a9a" />`)}</div>
          <div class="viewbtn">${icon(13, 13, svg`<path d="M.5.5h12v12H.5z" stroke="#9a9a9a" /><path d="M3.500 2.500h6v8h-6z" fill="#ccc" stroke="#9a9a9a" />`)}</div>
          <div class="viewbtn">${icon(13, 13, svg`<path d="M.5.5h12v12H.5zM.5 6.500h6v-6" stroke="#9a9a9a" />`)}</div>
        </div>
        <div class="zoom">
          ${icon(7, 3, svg`<path d="M0 1.500h7" stroke="#b0b0b0" stroke-width="1.500" />`)}
          <div class="slider"></div>
          ${icon(9, 9, svg`<path d="M0 4.500h9M4.500 0v9" stroke="#b0b0b0" stroke-width="1.500" />`)}
          <span>100%</span>
        </div>
      </div>
      ${this.taskbar()}
    `;
  }
}
